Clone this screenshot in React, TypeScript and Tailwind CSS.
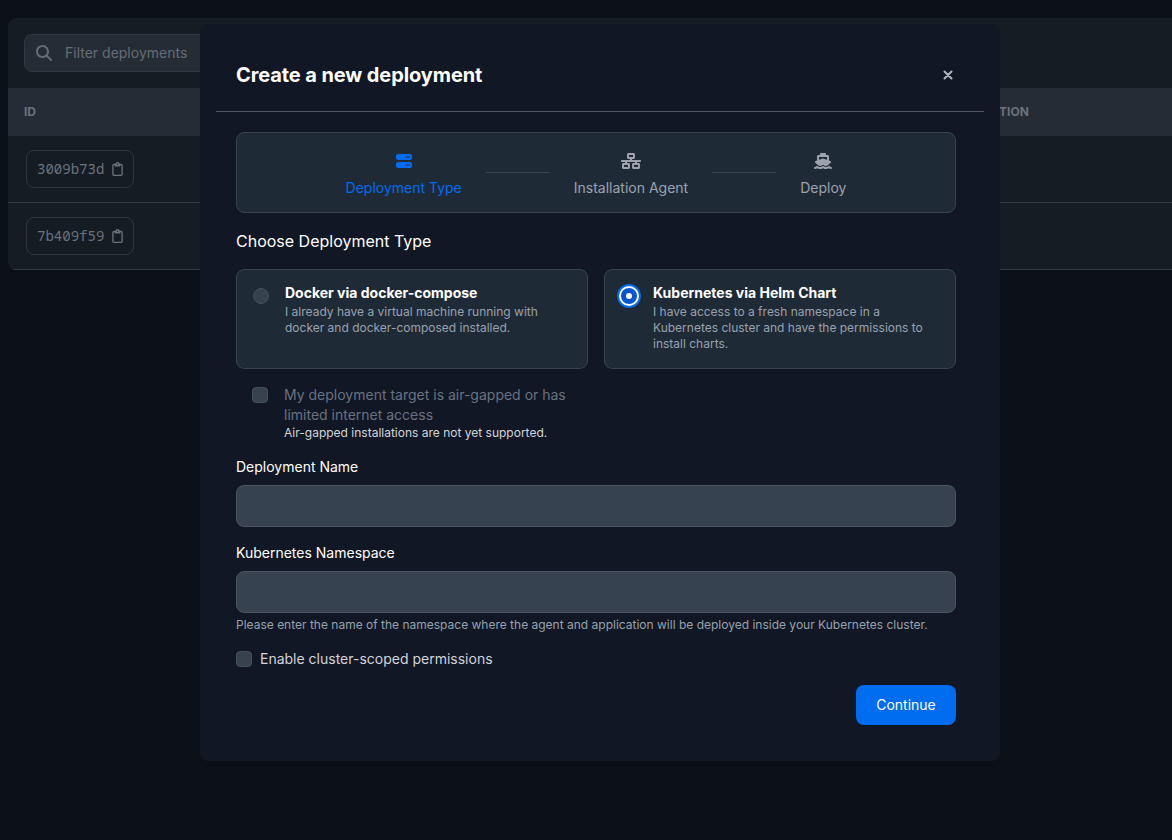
import { FaMagnifyingGlass, FaNetworkWired, FaRegClipboard, FaServer, FaShip } from "react-icons/fa6";

function IdRow({ id }: { id: string }) {
  return (
    <div className="flex h-[67px] items-center border-b border-[#343b44] pl-[18px]">
      <div className="flex h-[38px] w-[108px] items-center justify-between rounded-lg border border-[#2f363f] pr-[10px] pl-[10px]">
        <span className="pb-0.5 font-['Noto_Sans_Mono','DejaVu_Sans_Mono',monospace] text-[14px] tracking-[0.02px] text-[#6b727b]">{id}</span>
        <FaRegClipboard className="size-[14px] w-[11px] text-[#6b727b]" />
      </div>
    </div>
  );
}

function Field({ label }: { label: string }) {
  return (
    <label className="flex flex-col gap-2 text-sm leading-5 text-white">
      {label}
      <input className="h-[42px] w-full rounded-lg border border-[#4a5561] bg-[#36424f] px-3 outline-none" />
    </label>
  );
}

function Option({ title, text, checked }: { title: string; text: string; checked?: boolean }) {
  return (
    <div className="flex h-[100px] flex-1 rounded-lg border border-[#37424f] bg-[#1f2a37] pt-[13px] pr-4 pl-4">
      <div className="mt-[5px] mr-4 size-4 shrink-0">
        {checked ? (
          <div className="flex size-4 items-center justify-center rounded-full bg-[#0055d4] shadow-[0_0_0_2px_#fff,0_0_0_4px_#0867e8]">
            <div className="size-1.5 rounded-full bg-white" />
          </div>
        ) : (
          <div className="size-4 rounded-full border border-[#46515d] bg-[#37424f]" />
        )}
      </div>
      <div>
        <h3 className="text-sm leading-5 font-bold text-white">{title}</h3>
        <p className="mt-px text-xs leading-4 text-[#98a2ae]">{text}</p>
      </div>
    </div>
  );
}

export default function App() {
  return (
    <div className="relative h-[840px] w-[1172px] overflow-hidden bg-[#0a0f18] pt-[18px] pl-2 font-['Inter',sans-serif]">
      <div className="h-[252px] w-[1180px] overflow-hidden rounded-lg bg-[#151c24]">
        <div className="flex h-[70px] items-center pl-4">
          <div className="flex h-[38px] w-[340px] items-center gap-[13px] rounded-lg border border-[#323942] bg-[#262c35] pl-[11px] text-sm text-[#656c75]">
            <FaMagnifyingGlass className="size-4" />
            Filter deployments
          </div>
        </div>
        <div className="flex h-12 items-center bg-[#262c35] pl-4 text-xs font-bold text-[#6b727b]">
          <span className="w-[924px]">ID</span>
          <span>APPLICATION</span>
        </div>
        <IdRow id="3009b73d" />
        <IdRow id="7b409f59" />
      </div>

      <section className="absolute top-6 left-[200px] flex h-[737px] w-[800px] flex-col rounded-lg bg-[#111724] px-4">
        <header className="flex h-[88px] shrink-0 items-center justify-between border-b border-[#4b5563] pt-[15px] pr-[31px] pl-5">
          <h1 className="text-xl font-bold tracking-[-0.1px] text-white">Create a new deployment</h1>
          <svg viewBox="0 0 10 10" className="size-[10px] text-[#b0b6c0]" fill="none" stroke="currentColor" strokeWidth="2" strokeLinecap="round">
            <path d="M1.5 1.5l7 7M8.5 1.5l-7 7" />
          </svg>
        </header>
        <div className="flex flex-col pt-5 pr-7 pl-5">
          <div className="flex h-[81px] items-center justify-center rounded-lg border border-[#37424f] bg-[#1f2a37] text-sm leading-5 text-[#9ca3af]">
            <div className="flex flex-col items-center gap-[9px] pt-1.5 text-[#006cf0]">
              <FaServer className="size-4" />
              Deployment Type
            </div>
            <div className="mx-6 h-px w-16 bg-[#37424f]" />
            <div className="flex flex-col items-center gap-[9px] pt-1.5">
              <FaNetworkWired className="h-4 w-5" />
              Installation Agent
            </div>
            <div className="mx-6 h-px w-16 bg-[#37424f]" />
            <div className="flex flex-col items-center gap-[9px] pt-1.5">
              <FaShip className="h-4 w-[18px]" />
              Deploy
            </div>
          </div>

          <h2 className="mt-4 text-base leading-6 text-white">Choose Deployment Type</h2>
          <div className="mt-4 flex gap-4">
            <Option
              title="Docker via docker-compose"
              text="I already have a virtual machine running with docker and docker-composed installed."
            />
            <Option
              checked
              title="Kubernetes via Helm Chart"
              text="I have access to a fresh namespace in a Kubernetes cluster and have the permissions to install charts."
            />
          </div>

          <div className="mt-4 flex w-[352px] gap-4 pl-4">
            <div className="mt-0.5 size-4 shrink-0 rounded border border-[#46515d] bg-[#37424f]" />
            <div className="w-[300px]">
              <p className="text-sm leading-5 text-[#697280]">My deployment target is air-gapped or has limited internet access</p>
              <p className="text-xs leading-4 text-[#d1d5db]">Air-gapped installations are not yet supported.</p>
            </div>
          </div>

          <div className="mt-4">
            <Field label="Deployment Name" />
          </div>
          <div className="mt-4">
            <Field label="Kubernetes Namespace" />
          </div>
          <p className="mt-1 text-xs leading-4 text-[#98a2ae]">
            Please enter the name of the namespace where the agent and application will be deployed inside your Kubernetes cluster.
          </p>
          <div className="mt-4 flex items-center gap-2">
            <div className="size-4 rounded border border-[#46515d] bg-[#37424f]" />
            <span className="text-sm leading-5 text-[#d1d5db]">Enable cluster-scoped permissions</span>
          </div>
          <button className="mt-4 h-10 w-[100px] self-end rounded-lg bg-[#006cf0] text-sm text-white">Continue</button>
        </div>
      </section>
    </div>
  );
}
